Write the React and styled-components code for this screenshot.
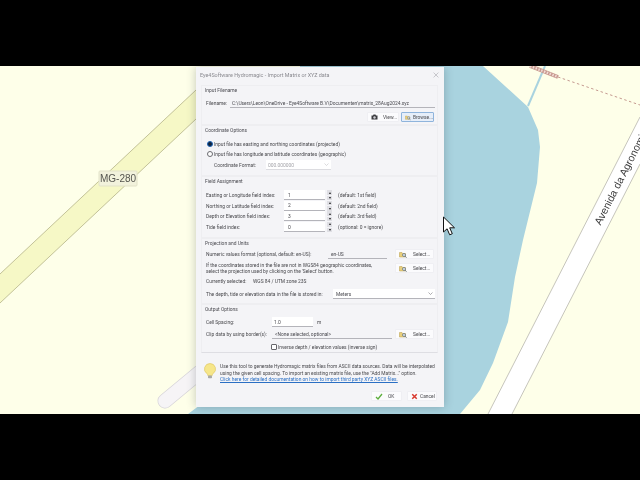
import React from "react";
import styled, { createGlobalStyle } from "styled-components";

const GlobalStyle = createGlobalStyle`
  html, body { margin: 0; padding: 0; background: #000; }
  body { width: 640px; height: 480px; overflow: hidden; font-family: Roboto, "Liberation Sans", sans-serif; }
`;

const Screen = styled.div`
  width: 640px;
  height: 480px;
  display: flex;
  flex-direction: column;
  background: #000;
`;

const Letterbox = styled.div`
  height: 66px;
  flex: none;
  background: #000;
`;

const Stage = styled.div`
  position: relative;
  height: 348px;
  flex: none;
  overflow: hidden;
  background: #feffe9;
`;

const MapCanvas = styled.svg`
  display: block;
  width: 640px;
  height: 348px;
  filter: blur(0.3px);
`;

const Cursor = styled.svg`
  position: absolute;
  left: 442px;
  top: 150px;
  width: 14px;
  height: 20px;
`;

const Dialog = styled.div`
  position: absolute;
  left: 196px;
  top: 1px;
  width: 248px;
  height: 340px;
  box-sizing: border-box;
  padding: 0 5px;
  display: flex;
  flex-direction: column;
  background: #f4f4f7;
  color: #48484c;
  font-size: 4.9px;
  line-height: 10px;
  box-shadow: 0 0 9px rgba(40, 50, 60, 0.28);
  filter: blur(0.36px);
`;

const TitleBar = styled.div`
  height: 18px;
  flex: none;
  box-sizing: border-box;
  padding-bottom: 3px;
  margin: 0 -1px;
  display: flex;
  align-items: center;
  justify-content: space-between;
  color: #8a8a90;
  font-size: 5.4px;
`;

const CloseGlyph = styled.svg`
  width: 6px;
  height: 6px;
  margin-right: 1px;
`;

const Section = styled.section`
  flex: none;
  height: ${(p) => p.$height}px;
  box-sizing: border-box;
  padding: 0 3px 0 4px;
  border: 1px solid #eeeef1;
  border-bottom-color: ${(p) => (p.$last ? "#dedee3" : "#eeeef1")};
  margin: 0 1px 0 0;
  display: flex;
  flex-direction: column;
`;

const Heading = styled.div`
  height: 10px;
  margin-left: -1px;
  margin-top: -1px;
  color: #4a4a50;
  flex: none;
`;

const Row = styled.div`
  display: flex;
  align-items: center;
  flex: none;
  white-space: nowrap;
  height: ${(p) => p.$h || 10}px;
  margin-top: ${(p) => p.$mt || 0}px;
  margin-left: ${(p) => p.$ml || 0}px;
`;

const Label = styled.span`
  flex: none;
  width: ${(p) => p.$w}px;
  white-space: nowrap;
`;

const Field = styled.div`
  flex: none;
  width: ${(p) => p.$w}px;
  height: 10px;
  box-sizing: border-box;
  display: flex;
  justify-content: space-between;
  align-items: center;
  padding-left: ${(p) => p.$pl ?? 2}px;
  padding-right: 2px;
  background: ${(p) => (p.$plain ? "transparent" : "#fff")};
  border-bottom: 1px solid ${(p) => (p.$muted ? "#dcdce0" : "#b4b4ba")};
  color: ${(p) => (p.$muted ? "#a3a3a8" : "#4a4a50")};
  white-space: nowrap;
  overflow: hidden;
`;

const Chevron = styled.svg`
  flex: none;
  width: 5px;
  height: 3px;
  stroke: ${(p) => (p.$muted ? "#c4c4c8" : "#77777c")};
`;

const Spinner = styled.div`
  flex: none;
  width: 5px;
  height: 10px;
  margin-left: 2px;
  display: flex;
  flex-direction: column;
  gap: 1px;
`;

const SpinButton = styled.div`
  flex: 1;
  display: flex;
  align-items: center;
  justify-content: center;
  background: #dfdfe4;
  &::after {
    content: "";
    border-left: 1.4px solid transparent;
    border-right: 1.4px solid transparent;
    ${(p) => (p.$down ? "border-top: 2px solid #222;" : "border-bottom: 2px solid #222;")}
  }
`;

const Hint = styled.span`
  margin-left: ${(p) => p.$ml || 6}px;
  white-space: nowrap;
`;

const Button = styled.div`
  flex: none;
  width: ${(p) => p.$w}px;
  height: 10px;
  box-sizing: border-box;
  margin-left: ${(p) => p.$ml || 0}px;
  display: flex;
  align-items: center;
  gap: ${(p) => p.$gap ?? 4}px;
  padding-left: 3px;
  background: ${(p) => (p.$active ? "#e6eef9" : "#fbfbfd")};
  border: 1px solid ${(p) => (p.$active ? "#8fb4dc" : "#efeff3")};
  border-radius: 1px;
  color: #48484c;
  line-height: 8px;
`;

const ButtonRow = styled.div`
  display: flex;
  justify-content: flex-end;
  flex: none;
  height: 10px;
  margin-top: 4px;
`;

const RadioDot = styled.span`
  flex: none;
  width: 6px;
  height: 6px;
  box-sizing: border-box;
  margin-right: 1px;
  border-radius: 50%;
  border: ${(p) => (p.$on ? "1.7px solid #1c63b7" : "0.8px solid #6b6b70")};
  background: ${(p) => (p.$on ? "#10243c" : "#fff")};
`;

const CheckBox = styled.span`
  flex: none;
  width: 6px;
  height: 6px;
  box-sizing: border-box;
  margin-right: 1px;
  border: 0.8px solid #67676c;
  border-radius: 1px;
  background: #fff;
`;

const Note = styled.div`
  flex: none;
  width: 186px;
  line-height: 6px;
  white-space: nowrap;
`;

const HelpPanel = styled.div`
  flex: none;
  height: 33px;
  display: flex;
  align-items: flex-start;
  padding: 11px 0 0 2px;
  box-sizing: border-box;
`;

const BulbIcon = styled.svg`
  flex: none;
  width: 14px;
  height: 16px;
  margin-top: -1px;
`;

const HelpText = styled.div`
  margin-left: 3px;
  margin-top: -1px;
  line-height: 6.5px;
  white-space: nowrap;
`;

const HelpLink = styled.a`
  color: #2a6fc4;
  text-decoration: underline;
`;

const Footer = styled.div`
  flex: none;
  display: flex;
  justify-content: flex-end;
  gap: 5px;
  margin-top: 5px;
  height: 10px;
  margin-right: 2px;
`;

const Camera = () => (
  <svg width="7" height="6" viewBox="0 0 14 12">
    <path d="M1 3h3l1-2h4l1 2h3v8H1z" fill="#3c3c40" />
    <circle cx="7" cy="7" r="2.4" fill="#cfcfd4" />
  </svg>
);

const FolderSearch = () => (
  <svg width="8" height="7" viewBox="0 0 16 14">
    <path d="M1 3h5l1 2h6v7H1z" fill="#e9cf7c" stroke="#b79a45" />
    <circle cx="10" cy="8" r="3" fill="#dfeaf5" stroke="#5b6a78" strokeWidth="1.4" />
    <path d="M12 10.4l3 3" stroke="#5b6a78" strokeWidth="1.8" />
  </svg>
);

const Bulb = () => (
  <BulbIcon viewBox="0 0 14 16">
    <path d="M7 0.5a5.5 5.5 0 0 0-3.2 10c.7.6 1 1.2 1 2h4.4c0-.8.3-1.4 1-2A5.5 5.5 0 0 0 7 .5z" fill="#f6e68a" stroke="#dcc25a" strokeWidth="0.6" />
    <rect x="5" y="12.6" width="4" height="2.6" rx="0.8" fill="#a9a9a4" />
  </BulbIcon>
);

const Check = () => (
  <svg width="8" height="7" viewBox="0 0 16 14">
    <path d="M2 8l4 4 8-10" fill="none" stroke="#5cae3c" strokeWidth="2.6" />
  </svg>
);

const Cross = () => (
  <svg width="7" height="7" viewBox="0 0 14 14">
    <path d="M2.5 2.5l9 9M11.5 2.5l-9 9" stroke="#d8392f" strokeWidth="3" />
  </svg>
);

const DownMark = ({ muted }) => (
  <Chevron $muted={muted} viewBox="0 0 10 6">
    <path d="M1 1l4 4 4-4" fill="none" strokeWidth="1.2" />
  </Chevron>
);

const SelectButton = ({ ml }) => (
  <Button $w={39} $ml={ml} $gap={6}>
    <FolderSearch />
    Select...
  </Button>
);

const fieldRows = [
  ["Easting or Longitude field index:", "1", "(default: 1st field)"],
  ["Northing or Latitude field index:", "2", "(default: 2nd field)"],
  ["Depth or Elevation field index:", "3", "(default: 3rd field)"],
  ["Tide field index:", "0", "(optional: 0 = ignore)"],
];

const StreetMap = () => (
  <MapCanvas viewBox="0 66 640 348">
    <path d="M300 66H483L528 107 538 130 540 147 537 183 523 240 515 277 508 322 493 363 480 390 460 414H188L200 405 300 200z" fill="#a9d3df" />
    <path d="M528 106L545 66" stroke="#a9d3df" strokeWidth="2" fill="none" />
    <path d="M196 90L0 274V303L196 119z" fill="#f6f8c6" />
    <path d="M196 90L0 274M196 119L0 303" stroke="#aaa97c" strokeWidth="0.7" fill="none" />
    <rect x="99" y="171" width="38" height="15" rx="1" fill="#f2f2dc" stroke="#e2e2c8" />
    <text x="118" y="182" textAnchor="middle" fontFamily="Liberation Sans, sans-serif" fontSize="10" fill="#55554f">MG-280</text>
    <path d="M165 401L200 372" stroke="#d6d3d8" strokeWidth="15" strokeLinecap="round" />
    <path d="M165 401L200 372" stroke="#f6f4f6" strokeWidth="13.6" strokeLinecap="round" />
    <path d="M530 66L558 77" stroke="#c89a90" strokeWidth="4" />
    <path d="M530 66L558 77" stroke="#f1dcd6" strokeWidth="2.4" strokeDasharray="1.5 1.5" />
    <path d="M558 77L640 105" stroke="#c49a90" strokeWidth="1" strokeDasharray="2.5 2.5" />
    <path d="M640 117L488 414H512L640 164z" fill="#fff" />
    <path d="M640 117L488 414M640 164L512 414" stroke="#aeaca4" strokeWidth="0.7" fill="none" />
    <text x="597" y="224" transform="rotate(-63 597 224)" dominantBaseline="central" fontFamily="Liberation Sans, sans-serif" fontSize="10.5" fill="#3a3a3a">Avenida da Agronomia</text>
  </MapCanvas>
);

export default function App() {
  return (
    <Screen>
      <GlobalStyle />
      <Letterbox />
      <Stage>
        <StreetMap />
        <Dialog>
          <TitleBar>
            <span>Eye4Software Hydromagic - Import Matrix or XYZ data</span>
            <CloseGlyph viewBox="0 0 10 10">
              <path d="M1 1l8 8M9 1l-8 8" stroke="#a8a8ae" strokeWidth="1" />
            </CloseGlyph>
          </TitleBar>

          <Section $height={40}>
            <Heading>Input Filename</Heading>
            <Row $mt={3}>
              <Label $w={24}>Filename:</Label>
              <Field $w={205} $plain>C:\Users\Leon\OneDrive - Eye4Software B.V\Documenten\matrix_28Aug2024.xyz</Field>
            </Row>
            <ButtonRow>
              <Button $w={32} $gap={5}>
                <Camera />
                View...
              </Button>
              <Button $w={33} $ml={2} $gap={2} $active>
                <FolderSearch />
                Browse...
              </Button>
            </ButtonRow>
          </Section>

          <Section $height={51}>
            <Heading>Coordinate Options</Heading>
            <Row $mt={4} $ml={1}>
              <RadioDot $on />
              Input file has easting and northing coordinates (projected)
            </Row>
            <Row $ml={1}>
              <RadioDot />
              Input file has longitude and latitude coordinates (geographic)
            </Row>
            <Row $mt={1} $ml={8}>
              <Label $w={52}>Coordinate Format:</Label>
              <Field $w={65} $muted>
                000.000000
                <DownMark muted />
              </Field>
            </Row>
          </Section>

          <Section $height={62}>
            <Heading>Field Assignment</Heading>
            <Row $h={10.6} $mt={4}>
              <Label $w={78}>{fieldRows[0][0]}</Label>
              <Field $w={41} $pl={4}>{fieldRows[0][1]}</Field>
              <Spinner><SpinButton /><SpinButton $down /></Spinner>
              <Hint>{fieldRows[0][2]}</Hint>
            </Row>
            {fieldRows.slice(1).map(([label, value, hint]) => (
              <Row $h={10.6} key={label}>
                <Label $w={78}>{label}</Label>
                <Field $w={41} $pl={4}>{value}</Field>
                <Spinner><SpinButton /><SpinButton $down /></Spinner>
                <Hint>{hint}</Hint>
              </Row>
            ))}
          </Section>

          <Section $height={66}>
            <Heading>Projection and Units</Heading>
            <Row $mt={1}>
              <Label $w={122}>Numeric values format (optional, default: en-US):</Label>
              <Field $w={59} $plain $pl={3}>en-US</Field>
              <SelectButton ml={8} />
            </Row>
            <Row $h={16} $mt={1}>
              <Note>
                If the coordinates stored in the file are not in WGS84 geographic coordinates,
                <br />
                select the projection used by clicking on the 'Select' button.
              </Note>
              <SelectButton ml={3} />
            </Row>
            <Row>
              <Label $w={47}>Currently selected:</Label>
              WGS 84 / UTM zone 23S
            </Row>
            <Row $mt={3}>
              <Label $w={127}>The depth, tide or elevation data in the file is stored in:</Label>
              <Field $w={102} $pl={3}>
                Meters
                <DownMark />
              </Field>
            </Row>
          </Section>

          <Section $height={49} $last>
            <Heading>Output Options</Heading>
            <Row $mt={3}>
              <Label $w={66}>Cell Spacing:</Label>
              <Field $w={41} $pl={2}>1.0</Field>
              <Hint $ml={4}>m</Hint>
            </Row>
            <Row $mt={2}>
              <Label $w={66}>Clip data by using border(s):</Label>
              <Field $w={120} $plain $pl={3}>&lt;None selected, optional&gt;</Field>
              <SelectButton ml={3} />
            </Row>
            <Row $mt={3} $ml={65}>
              <CheckBox />
              Inverse depth / elevation values (inverse sign)
            </Row>
          </Section>

          <HelpPanel>
            <Bulb />
            <HelpText>
              Use this tool to generate Hydromagic matrix files from ASCII data sources. Data will be interpolated
              <br />
              using the given cell spacing. To import an existing matrix file, use the "Add Matrix..." option.
              <br />
              <HelpLink>Click here for detailed documentation on how to import third party XYZ ASCII files.</HelpLink>
            </HelpText>
          </HelpPanel>

          <Footer>
            <Button $w={31} $gap={5}>
              <Check />
              OK
            </Button>
            <Button $w={30} $gap={2}>
              <Cross />
              Cancel
            </Button>
          </Footer>
        </Dialog>
        <Cursor viewBox="0 0 14 20">
          <path d="M1.5 1v15l3.6-3.2 2.6 6 2.6-1.1-2.6-5.9h4.8z" fill="#fff" stroke="#111" strokeWidth="1" />
        </Cursor>
      </Stage>
      <Letterbox />
    </Screen>
  );
}
